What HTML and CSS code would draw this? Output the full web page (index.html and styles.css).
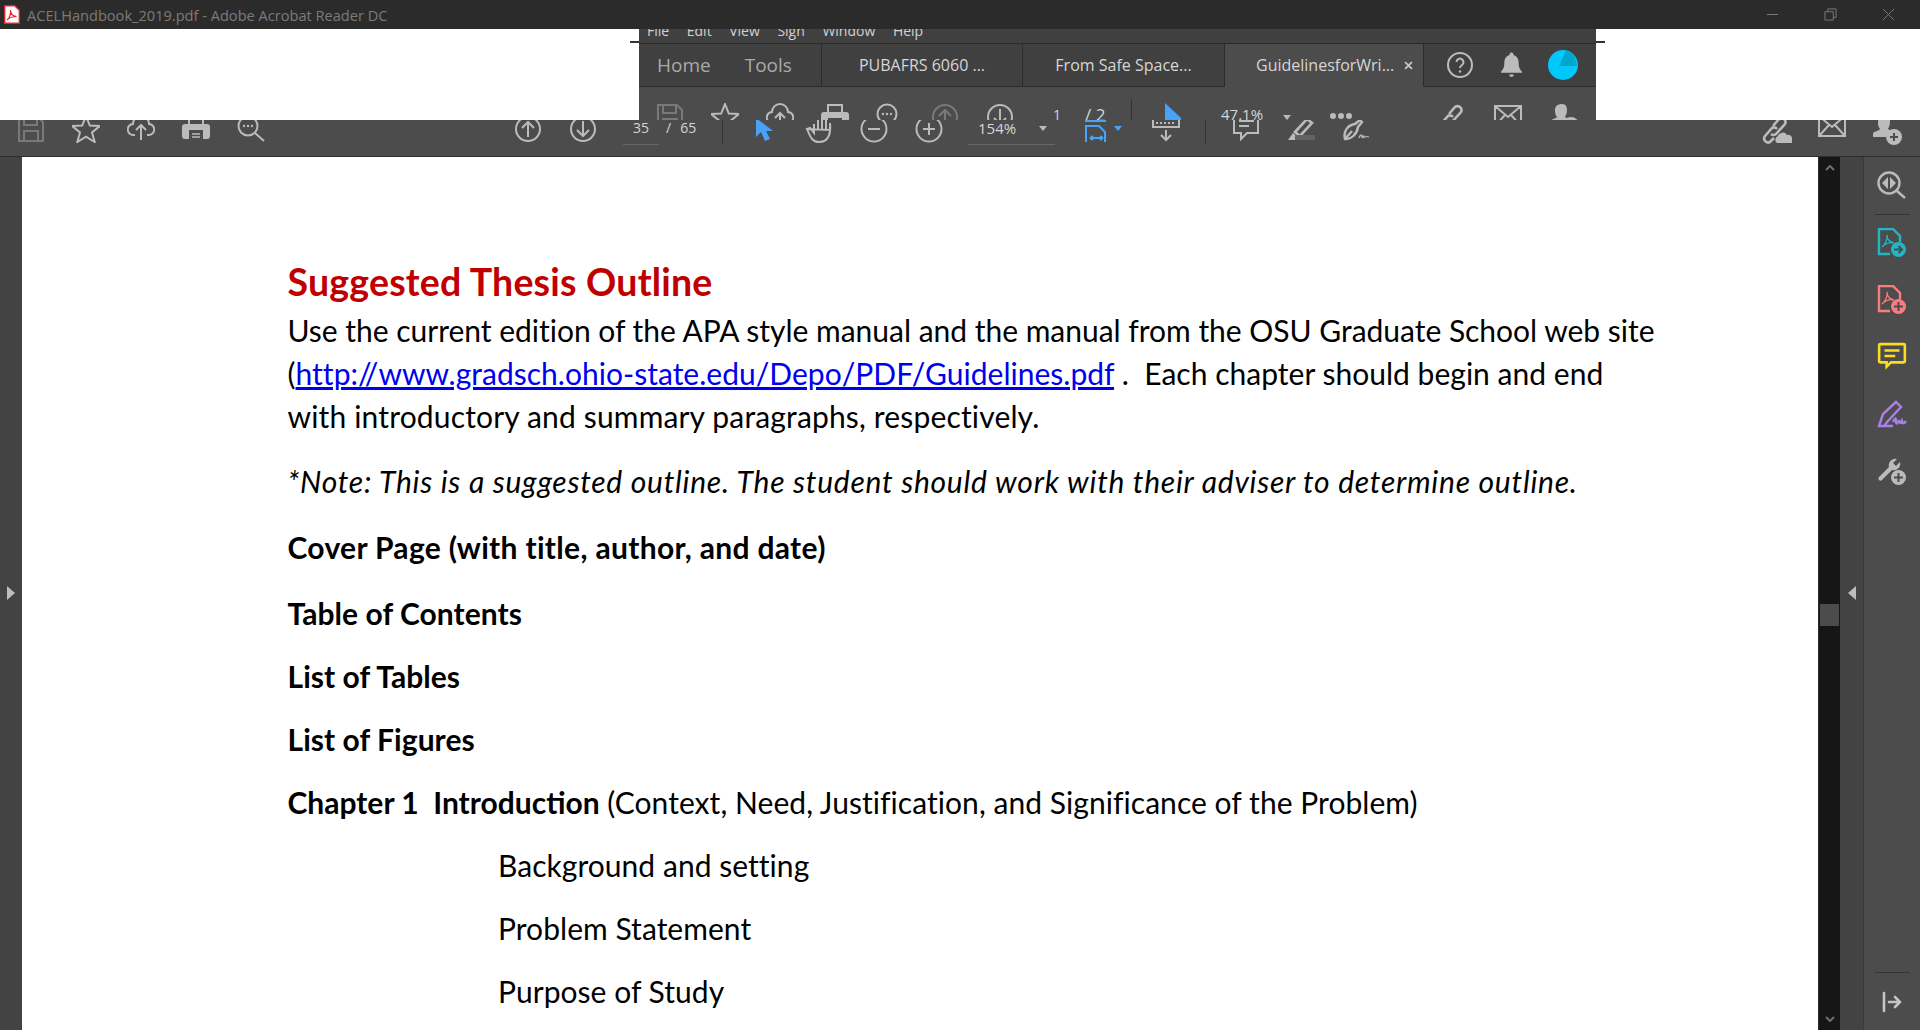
FILE: index.html
```html
<!DOCTYPE html>
<html lang="en">
<head>
<meta charset="utf-8">
<title>ACELHandbook_2019.pdf - Adobe Acrobat Reader DC</title>
<link rel="stylesheet" href="styles.css">
</head>
<body>
<svg class="defs" aria-hidden="true">
  <symbol id="i-save" viewBox="0 0 28 28"><path d="M2 2h19l5 5v19H2z"/><path d="M7 2v8h13V2M7 26V16h14v10"/></symbol>
  <symbol id="i-star" viewBox="0 0 28 28"><path d="M14 1l3.800 9.500 10 .6-7.800 6.300 2.700 9.600-8.700-5.400-8.700 5.400 2.700-9.600L0.200 11.100l10-.6z"/></symbol>
  <symbol id="i-cloud" viewBox="0 0 28 28"><path d="M8 20H6.500a5.500 5.500 0 0 1-.5-11 8 8 0 0 1 16 0 5.500 5.500 0 0 1-.5 11H20"/><path d="M14 25V10M9 15l5-5 5 5"/></symbol>
  <symbol id="i-print" viewBox="0 0 28 28"><path d="M7 9V2h14v7"/><rect class="solid" x="0" y="9" width="28" height="15" rx="3"/><rect class="cut" x="7" y="15" width="14" height="11"/><path class="thin-line" d="M10 19h8M10 22h8"/></symbol>
  <symbol id="i-search" viewBox="0 0 28 28"><circle cx="11" cy="11" r="9.500"/><path d="M18 18l9 8"/><circle class="solid" cx="7" cy="11" r="1.200"/><circle class="solid" cx="11" cy="11" r="1.200"/><circle class="solid" cx="15" cy="11" r="1.200"/></symbol>
  <symbol id="i-up" viewBox="0 0 28 28"><circle cx="14" cy="14" r="12"/><path d="M14 22V7M8 13l6-6 6 6"/></symbol>
  <symbol id="i-down" viewBox="0 0 28 28"><circle cx="14" cy="14" r="12"/><path d="M14 6v15M8 15l6 6 6-6"/></symbol>
  <symbol id="i-cursor" viewBox="0 0 28 28"><path class="blue" d="M0 3v19l5-5 4 9 5-2-4-8h7z"/></symbol>
  <symbol id="i-hand" viewBox="0 0 28 28"><path d="M2 14l3-1 4 5V9M13 14V5M17 14V4M21 14V5M25 15V8c1 10-1 19-11 19-6 0-8-3-12-13z"/></symbol>
  <symbol id="i-minus" viewBox="0 0 28 28"><circle cx="14" cy="14" r="12.500"/><path d="M8 14h12"/></symbol>
  <symbol id="i-plus" viewBox="0 0 28 28"><circle cx="14" cy="14" r="12.500"/><path d="M8 14h12M14 8v12"/></symbol>
  <symbol id="i-fit" viewBox="0 0 28 28"><path class="blue-line" d="M1 6h21M2 27V11h13l6 6v10M6 23h13M6 23l3-2M6 23l3 2M19 23l-3-2M19 23l-3 2"/></symbol>
  <symbol id="i-ruler" viewBox="0 0 28 28"><path d="M1 5v7h26V5"/><path stroke-dasharray="2 2" d="M4 8h20"/><path d="M14 15v10M9 20l5 5 5-5"/></symbol>
  <symbol id="i-comment" viewBox="0 0 28 28"><path d="M2 2h24v16H15l-6 6v-6H2z"/><path d="M7 6h15M7 11h10"/></symbol>
  <symbol id="i-highlight" viewBox="0 0 28 28"><path d="M8 17L20 4l5 4-12 13z" stroke-width="2.600"/><path class="solid" d="M1 25l5-7 5 4-3 3z"/><rect class="dim-fill" x="8" y="20" width="20" height="5"/></symbol>
  <symbol id="i-sign" viewBox="0 0 28 28"><path d="M3 24c-2-8 3-14 10-15l5-4 2 2-4 5c-1 7-7 13-13 12zM3 24l7-8" stroke-width="2.400"/><path class="thin" d="M17 23c2-5 3-3 3 0 1-3 2-3 2 0 1-2 2-2 5-1"/></symbol>
  <symbol id="i-link" viewBox="0 0 30 30"><path stroke-width="2.600" d="M11 11l6-7a4 4 0 0 1 6 5l-9 10a4 4 0 0 1-5 0M15 14a4 4 0 0 0-5-1l-7 8a4 4 0 0 0 5 6l4-4"/><path class="solid" d="M15 28a4 4 0 0 1 1-7 5 5 0 0 1 9-1 4 4 0 0 1 5 5v3z"/></symbol>
  <symbol id="i-mail" viewBox="0 0 28 28"><path d="M1 1h26v20H1zM1 1l13 11L27 1M1 21l10-11M27 21L17 10"/></symbol>
  <symbol id="i-person" viewBox="0 0 30 30"><path class="solid" d="M13 1c4 0 5 3 5 6 0 3-1 5-2 7 1 1 2 1 3 2-3 1-4 3-5 6H1v-3c0-3 6-3 7-5-2-2-2-5-2-7 0-4 3-6 7-6z"/><circle class="solid" cx="22" cy="22" r="8"/><path class="cut-line" d="M22 18v8M18 22h8"/></symbol>
  <symbol id="i-view" viewBox="0 0 30 30"><circle cx="12" cy="12" r="10.500"/><path d="M20 20l8 7"/><path class="solid" d="M11 6v12l-6-6zM13 6v12l6-6z"/></symbol>
  <symbol id="i-pdf-go" viewBox="0 0 30 30"><path d="M13 26H2V1h14l7 7v6"/><path class="thin" d="M5 19c3-2 6-8 5-12 0 4 3 7 7 8-4-1-8 0-12 4z"/><circle class="fill" cx="21.500" cy="21.500" r="7.500"/><path class="cut-line" d="M17 21.500h8M21.500 18l3.500 3.500-3.500 3.500"/></symbol>
  <symbol id="i-pdf-add" viewBox="0 0 30 30"><path d="M13 26H2V1h14l7 7v6"/><path class="thin" d="M5 19c3-2 6-8 5-12 0 4 3 7 7 8-4-1-8 0-12 4z"/><circle class="fill" cx="21.500" cy="21.500" r="7.500"/><path class="cut-line" d="M21.500 17v9M17 21.500h9"/></symbol>
  <symbol id="i-note" viewBox="0 0 26 28"><path d="M2 2h22a1 1 0 0 1 1 1v15a1 1 0 0 1-1 1H12l-4 4v-4H2a1 1 0 0 1-1-1V3a1 1 0 0 1 1-1z"/><path d="M6 8h14M6 13h10"/></symbol>
  <symbol id="i-pen" viewBox="0 0 30 28"><path d="M2 26l4-12L19 2l5 5-13 14-4 5zM2 26h14"/><path d="M16 22c2-4 3-5 3-1 0 4 2 3 3-1 1 4 2 4 3 1 1 3 2 3 4 0"/></symbol>
  <symbol id="i-tool-add" viewBox="0 0 30 30"><path class="fill" d="M2 21L12 11a6.500 6.500 0 0 1 8-8l-4 4 3 3 4-4a6.500 6.500 0 0 1-8 8L5 24a2 2 0 0 1-3-3z"/><circle class="fill" cx="21.500" cy="21.500" r="7.500"/><path class="cut-line" d="M21.500 17v9M17 21.500h9"/></symbol>
  <symbol id="i-collapse" viewBox="0 0 20 22"><path d="M2 2v18"/><path d="M7 11h11M13 6l5 5-5 5"/></symbol>
</svg>

<header class="titlebar">
  <svg class="app-icon" viewBox="0 0 16 19"><path d="M.7.700h10l4.600 4.600v13H.7z"/><path class="swirl" d="M3 15c3-2 4-7 3.500-10 0 4 2 6 6 6.500-3.500 0-7 1-9.500 3.500z"/></svg>
  <span class="app-title">ACELHandbook_2019.pdf - Adobe Acrobat Reader DC</span>
  <div class="win-controls">
    <svg viewBox="0 0 14 14"><path d="M1 7h12"/></svg>
    <svg viewBox="0 0 14 14"><path d="M1 4h9v9H1zM4 4V1h9v9h-3"/></svg>
    <svg viewBox="0 0 14 14"><path d="M1 1l12 12M13 1L1 13"/></svg>
  </div>
</header>

<div class="band">
  <span class="tick tick-left"></span>
  <section class="ghost">
    <nav class="menu">
      <span>File</span><span>Edit</span><span>View</span><span>Sign</span><span>Window</span><span>Help</span>
    </nav>
    <div class="tabs">
      <div class="home-tools"><span>Home</span><span>Tools</span></div>
      <div class="tab tab-a">PUBAFRS 6060 ...</div>
      <div class="tab tab-b">From Safe Space...</div>
      <div class="tab tab-active"><span>GuidelinesforWri...</span><svg class="tab-x" viewBox="0 0 8 8"><path d="M1 1l6 6M7 1L1 7"/></svg></div>
      <div class="tab-tail">
        <svg class="help" viewBox="0 0 26 26"><circle cx="13" cy="13" r="12"/><path d="M9.500 10a3.500 3.500 0 1 1 5.500 3c-1.500 1-2 1.500-2 3"/><circle class="solid" cx="13" cy="19.500" r="1.200"/></svg>
        <svg class="bell" viewBox="0 0 22 26"><path d="M11 0a2 2 0 0 1 2 2.500c4 1 5.500 4.500 5.500 8 0 5 1 7 3.500 9.500v1H0v-1c2.500-2.500 3.500-4.500 3.500-9.500 0-3.500 1.500-7 5.500-8A2 2 0 0 1 11 0zM8.500 23h5a2.500 2.500 0 0 1-5 0z"/></svg>
        <svg class="avatar" viewBox="0 0 30 30"><circle cx="15" cy="15" r="15"/><path d="M11 16L18 1c6 1 10 6 11 15z"/></svg>
      </div>
    </div>
    <div class="ghost-tools">
      <span class="slot"><svg class="ico dim"><use href="#i-save"/></svg></span>
      <span class="slot"><svg class="ico"><use href="#i-star"/></svg></span>
      <span class="slot"><svg class="ico"><use href="#i-cloud"/></svg></span>
      <span class="slot"><svg class="ico"><use href="#i-print"/></svg></span>
      <span class="slot"><svg class="ico"><use href="#i-search"/></svg></span>
      <span class="slot"><svg class="ico dim"><use href="#i-up"/></svg></span>
      <span class="slot"><svg class="ico"><use href="#i-down"/></svg></span>
      <span class="gt-text gt-one">1</span>
      <span class="gt-text gt-two">/ 2</span>
      <span class="gt-sep"></span>
      <svg class="gt-tri" viewBox="0 0 16 18"><path d="M0 0l16 15v2H0z"/></svg>
      <span class="gt-text gt-zoom">47.1%</span>
      <span class="caret gt-caret"></span>
      <span class="gt-dots"><i></i><i></i><i></i></span>
      <svg class="ico gt-link"><use href="#i-link"/></svg>
      <svg class="ico gt-mail"><use href="#i-mail"/></svg>
      <svg class="ico gt-person"><use href="#i-person"/></svg>
    </div>
  </section>
  <span class="tick tick-right"></span>
</div>

<div class="toolbar">
  <span class="slot"><svg class="ico dim"><use href="#i-save"/></svg></span>
  <span class="slot"><svg class="ico"><use href="#i-star"/></svg></span>
  <span class="slot"><svg class="ico"><use href="#i-cloud"/></svg></span>
  <span class="slot"><svg class="ico"><use href="#i-print"/></svg></span>
  <span class="slot"><svg class="ico"><use href="#i-search"/></svg></span>
  <span class="slot tb-up"><svg class="ico"><use href="#i-up"/></svg></span>
  <span class="slot"><svg class="ico"><use href="#i-down"/></svg></span>
  <span class="field tb-page">35</span>
  <span class="tb-total">/ 65</span>
  <span class="tb-sep tb-sep-a"></span>
  <svg class="ico tb-cursor"><use href="#i-cursor"/></svg>
  <svg class="ico tb-hand"><use href="#i-hand"/></svg>
  <svg class="ico tb-step"><use href="#i-minus"/></svg>
  <svg class="ico tb-step"><use href="#i-plus"/></svg>
  <span class="field tb-zoom"><span>154%</span><span class="caret"></span></span>
  <svg class="ico tb-fit"><use href="#i-fit"/></svg>
  <span class="caret caret-blue"></span>
  <svg class="ico tb-ruler"><use href="#i-ruler"/></svg>
  <span class="tb-sep tb-sep-b"></span>
  <svg class="ico tb-comment"><use href="#i-comment"/></svg>
  <svg class="ico tb-step"><use href="#i-highlight"/></svg>
  <svg class="ico tb-step"><use href="#i-sign"/></svg>
  <span class="tb-end">
    <svg class="ico"><use href="#i-link"/></svg>
    <svg class="ico"><use href="#i-mail"/></svg>
    <svg class="ico"><use href="#i-person"/></svg>
  </span>
</div>

<main class="workspace">
  <div class="strip"><span class="tri tri-right"></span></div>
  <article class="page">
    <h1>Suggested Thesis Outline</h1>
    <p class="intro"><span class="ln ln-1">Use the current edition of the APA style manual and the manual from the OSU Graduate School web site</span><span class="ln ln-2">(<a href="#">http://www.gradsch.ohio-state.edu/Depo/PDF/Guidelines.pdf</a> .  Each chapter should begin and end</span><span class="ln">with introductory and summary paragraphs, respectively.</span></p>
    <p class="note">*Note: This is a suggested outline. The student should work with their adviser to determine outline.</p>
    <p class="bold first">Cover Page (with title, author, and date)</p>
    <p class="bold first tight">Table of Contents</p>
    <p class="bold tight">List of Tables</p>
    <p class="bold tight">List of Figures</p>
    <p class="line"><b>Chapter 1  Introduction</b> (Context, Need, Justification, and Significance of the Problem)</p>
    <p class="line sub">Background and setting</p>
    <p class="line sub">Problem Statement</p>
    <p class="line sub">Purpose of Study</p>
  </article>
  <div class="scrollbar">
    <svg class="chev" viewBox="0 0 10 6"><path d="M1 5l4-4 4 4"/></svg>
    <span class="thumb"></span>
    <svg class="chev chev-end" viewBox="0 0 10 6"><path d="M1 1l4 4 4-4"/></svg>
  </div>
  <div class="gutter"><span class="tri tri-left"></span></div>
  <aside class="panel">
    <svg class="side"><use href="#i-view"/></svg>
    <span class="side-rule"></span>
    <svg class="side teal"><use href="#i-pdf-go"/></svg>
    <svg class="side coral"><use href="#i-pdf-add"/></svg>
    <svg class="side yellow"><use href="#i-note"/></svg>
    <svg class="side purple"><use href="#i-pen"/></svg>
    <svg class="side grey"><use href="#i-tool-add"/></svg>
    <span class="side-rule side-rule-end"></span>
    <svg class="side-collapse"><use href="#i-collapse"/></svg>
  </aside>
</main>
</body>
</html>
```

FILE: styles.css
```css
* { box-sizing: border-box; }
html, body { margin: 0; height: 1030px; overflow: hidden; background: #fff; }
body { font-family: "Open Sans", "Noto Sans", sans-serif; }
.defs { position: absolute; width: 0; height: 0; }

/* title bar */
.titlebar { height: 29px; background: #2b2b2b; display: flex; align-items: center; padding-left: 4px; }
.app-icon { width: 16px; height: 19px; }
.app-icon path { fill: #fff; stroke: #e8232a; stroke-width: 1.4; }
.app-icon .swirl { fill: none; stroke: #e8232a; stroke-width: 1.2; }
.app-title { margin-left: 7px; font-size: 14.6px; color: #7b7b7b; white-space: nowrap; }
.win-controls { margin-left: auto; display: flex; gap: 45px; padding-right: 25px; }
.win-controls svg { width: 13px; height: 13px; fill: none; stroke: #7d7d7d; stroke-width: 1; }

/* glitched band */
.band { height: 91px; display: flex; padding-left: 639px; position: relative; background: #fff; }
.tick { position: absolute; top: 12px; height: 2px; width: 9px; background: #333; }
.tick-left { left: 630px; }
.tick-right { left: 1596px; }
.ghost { width: 957px; display: flex; flex-direction: column; background: #404040; }
.menu { height: 14px; overflow: hidden; display: flex; gap: 17.6px; padding-left: 8px; font-size: 14px; line-height: 18px; color: #d2d2d2; }
.menu span { margin-top: -7px; }
.tabs { height: 44px; display: flex; border-top: 1px solid #2c2c2c; }
.home-tools { width: 183px; flex: none; display: flex; gap: 34px; padding-left: 18px; align-items: center; font-size: 19px; color: #a9a9a9; border-right: 1px solid #2c2c2c; border-bottom: 1px solid #2c2c2c; }
.tab { flex: none; display: flex; align-items: center; justify-content: center; font-size: 16px; color: #d6d6d6; border-right: 1px solid #2c2c2c; border-bottom: 1px solid #2c2c2c; white-space: nowrap; }
.tab-a { width: 201px; }
.tab-b { width: 202px; }
.tab-active { width: 199px; background: #4c4c4c; border-bottom-color: #4c4c4c; justify-content: flex-start; padding-left: 31px; }
.tab-x { width: 9px; height: 9px; margin-left: 10px; fill: none; stroke: #c4c4c4; stroke-width: 1.700; }
.tab-tail { flex: 1; display: flex; align-items: center; padding-left: 23px; border-bottom: 1px solid #2c2c2c; }
.help { width: 26px; height: 26px; fill: none; stroke: #bcbcbc; stroke-width: 2; }
.help .solid { fill: #bcbcbc; stroke: none; }
.bell { width: 21px; height: 26px; margin-left: 28px; fill: #bcbcbc; }
.avatar { width: 30px; height: 30px; margin-left: 26px; fill: #00c7fc; }
.avatar path { fill: #02a6cb; }

/* icons */
.ico { width: 28px; height: 28px; flex: none; fill: none; color: #bbb; stroke: currentColor; stroke-width: 2; display: block; overflow: visible; }
.ico.dim { color: #797979; }
.solid { fill: currentColor; stroke: none; }
.fill { fill: currentColor; stroke: none; }
.cut { fill: #4c4c4c; stroke: none; }
.thin-line { stroke-width: 1.500; }
.cut-line { stroke: #4c4c4c; stroke-width: 2; }
.thin { stroke-width: 1.300; }
.blue { fill: #4aa2f7; stroke: none; }
.blue-line { stroke: #4aa2f7; }
.dim-fill { fill: #636363; stroke: none; }
.slot { width: 55px; flex: none; display: flex; justify-content: center; }
.caret { display: block; width: 0; height: 0; border-left: 4px solid transparent; border-right: 4px solid transparent; border-top: 5px solid #bbb; }
.caret-blue { border-top-color: #4aa2f7; margin: 6px 0 0 2px; flex: none; }

/* ghost toolbar */
.ghost-tools { height: 33px; background: #4c4c4c; overflow: hidden; display: flex; align-items: flex-start; padding-left: 3px; }
.ghost-tools .ico { margin-top: 16px; }
.gt-text { flex: none; margin-top: 20px; font-size: 14px; line-height: 16px; color: #d6d6d6; white-space: nowrap; }
.gt-one { margin-left: 26px; width: 8px; }
.gt-two { margin-left: 24px; width: 22px; font-size: 17px; }
.gt-sep { flex: none; width: 1px; height: 21px; margin: 12px 0 0 24px; background: #333; }
.gt-tri { flex: none; width: 16px; height: 18px; margin: 16px 0 0 33px; fill: #4aa2f7; }
.gt-text.gt-zoom { margin-left: 40px; width: 40px; font-size: 15px; margin-top: 19px; }
.gt-caret { flex: none; margin: 28px 0 0 22px; }
.gt-dots { flex: none; width: 22px; margin: 26px 0 0 39px; display: flex; justify-content: space-between; }
.gt-dots i { width: 6px; height: 6px; border-radius: 50%; background: #bbb; }
.ghost-tools .gt-link { margin-left: 86px; width: 30px; height: 30px; }
.ghost-tools .gt-mail { margin-left: 26px; margin-top: 18px; }
.ghost-tools .gt-person { margin-left: 27px; width: 30px; height: 30px; }

/* main toolbar */
.toolbar { height: 37px; background: #4c4c4c; border-bottom: 1px solid #2e2e2e; overflow: hidden; display: flex; align-items: flex-start; padding-left: 3px; font-size: 14px; line-height: 16px; color: #d6d6d6; }
.toolbar .ico { margin-top: -5px; }
.tb-up { margin-left: 222px; }
.field { flex: none; height: 25px; border-bottom: 1px solid #666; display: flex; }
.tb-page { width: 36px; margin-left: 13px; justify-content: center; }
.tb-total { flex: none; width: 32px; margin-left: 7px; white-space: nowrap; word-spacing: 5.500px; }
.tb-sep { flex: none; width: 1px; height: 25px; background: #333; }
.tb-sep-a { margin-left: 24px; }
.tb-sep-b { margin-left: 25px; }
.toolbar .tb-cursor { margin-left: 33px; }
.toolbar .tb-hand { margin-left: 21px; }
.toolbar .tb-step { margin-left: 27px; }
.tb-zoom { width: 87px; margin-left: 25px; padding-left: 10px; font-size: 15px; align-items: flex-start; }
.tb-zoom .caret { margin: 6px 0 0 23px; }
.toolbar .tb-fit { margin-left: 29px; }
.toolbar .tb-ruler { margin-left: 30px; }
.toolbar .tb-comment { margin-left: 26px; }
.tb-end { margin-left: auto; display: flex; gap: 26px; padding-right: 18px; }
.tb-end .ico:last-child { width: 30px; height: 30px; }
.tb-end .ico:first-child { width: 30px; height: 30px; }

/* workspace */
.workspace { height: 873px; display: flex; overflow: hidden; }
.strip { width: 22px; flex: none; background: #434343; display: flex; align-items: center; justify-content: center; padding-bottom: 1px; }
.tri { display: block; width: 0; height: 0; border-top: 7px solid transparent; border-bottom: 7px solid transparent; }
.tri-right { border-left: 8px solid #bdbdbd; }
.tri-left { border-right: 8px solid #bdbdbd; }

.page { flex: 1; min-width: 0; background: #fff; padding: 104px 0 0 265.500px; overflow: hidden; color: #000; font-family: Lato, "Liberation Sans", sans-serif; font-size: 30px; line-height: 43px; letter-spacing: .16px; }
.page h1 { margin: 0 0 6px; font-size: 37.500px; line-height: 42px; font-weight: 700; color: #c00000; letter-spacing: .2px; white-space: nowrap; }
.page p { margin: 0; white-space: pre; }
.page a { color: #0000f0; text-decoration: underline; }
.page .ln { display: block; }
.page .ln-1 { letter-spacing: -.015px; }
.page .ln-2 { letter-spacing: .02px; }
.page b, .page .bold { font-weight: 700; letter-spacing: .32px; }
.page .tight { letter-spacing: .05px; }
.page b { letter-spacing: 0; }
.page .note { margin-top: 22px; font-style: italic; letter-spacing: .75px; }
.page .bold { margin-top: 20px; }
.page .first { margin-top: 23px; }
.page .line { margin-top: 20px; letter-spacing: .05px; }
.page .sub { padding-left: 210.500px; letter-spacing: .04px; }

.scrollbar { width: 22px; flex: none; background: #161616; border-left: 1px solid #2b2b2b; display: flex; flex-direction: column; align-items: center; padding-top: 8px; }
.chev { width: 10px; height: 6px; fill: none; stroke: #6e6e6e; stroke-width: 2; flex: none; }
.thumb { width: 19px; height: 22px; margin-top: 433px; background: #4c4c4c; }
.chev-end { margin-top: auto; margin-bottom: 8px; }
.gutter { width: 24px; flex: none; background: #434343; border-right: 1px solid #3a3a3a; display: flex; align-items: center; justify-content: center; padding-bottom: 1px; }

.panel { width: 56px; flex: none; background: #4c4c4c; display: flex; flex-direction: column; align-items: center; padding-top: 14px; }
.side { width: 30px; height: 30px; flex: none; margin-bottom: 27px; fill: none; stroke-width: 2.400; color: #bbb; stroke: currentColor; }
.side-rule { width: 35px; height: 1px; background: #333; flex: none; margin: -14px 0 13px; }
.side.teal { color: #1eb9c4; }
.side.coral { color: #fb7b82; }
.side.yellow { color: #fbdc1e; }
.side.purple { color: #a97fe8; }
.side-rule-end { margin: auto 0 18px; }
.side-collapse { width: 20px; height: 22px; flex: none; margin-bottom: 17px; fill: none; stroke: #c4c4c4; stroke-width: 2.600; stroke-linecap: round; }
```
